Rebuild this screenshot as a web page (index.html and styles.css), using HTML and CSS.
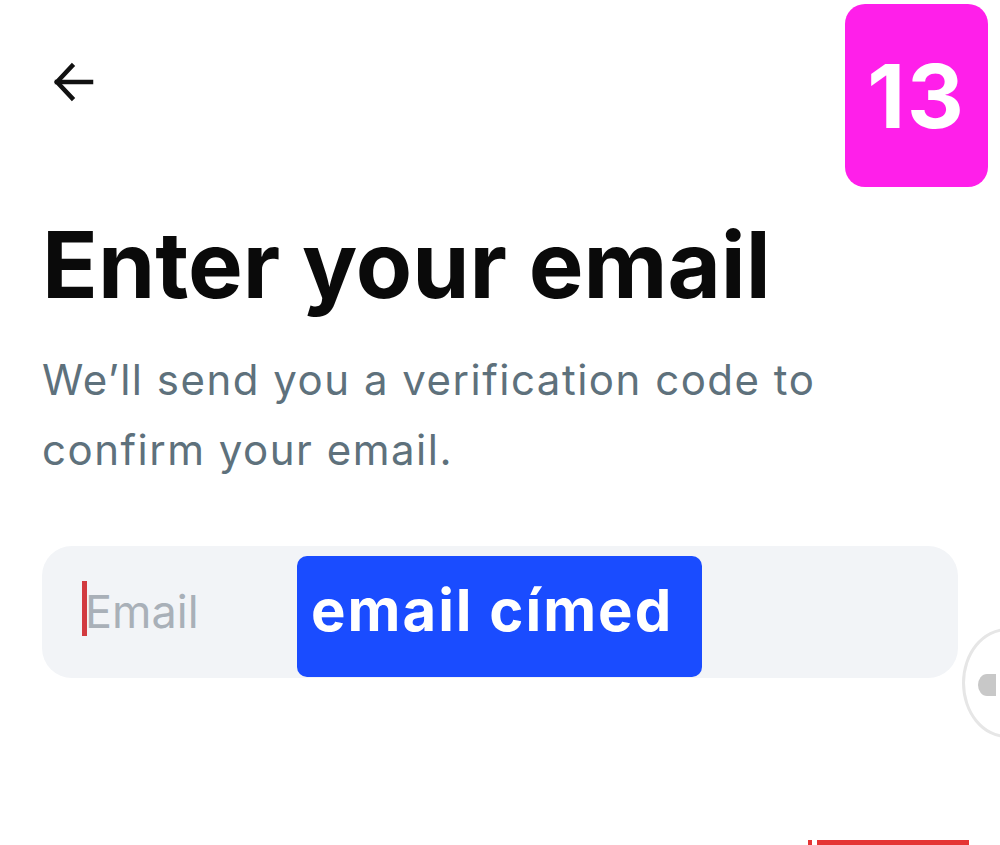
FILE: index.html
```html
<!DOCTYPE html>
<html>
<head>
<meta charset="utf-8">
<link rel="stylesheet" href="styles.css">
</head>
<body>
<div class="screen">
  <header class="top">
    <button class="back" aria-label="Back">
      <svg width="44" height="44" viewBox="0 0 44 44" fill="none" stroke="#111" stroke-width="4.5" stroke-linecap="square">
        <path d="M40 21H6"/>
        <path d="M21 5L6 21L21 37"/>
      </svg>
    </button>
    <div class="badge">13</div>
  </header>
  <h1 class="title">Enter your email</h1>
  <p class="sub">We’ll send you a verification code to confirm your email.</p>
  <div class="field">
    <span class="caret"></span>
    <span class="placeholder">Email</span>
    <span class="tag">email címed</span>
  </div>
  <div class="handle"><span class="dot"></span></div>
  <div class="redbar"><span class="r1"></span><span class="r2"></span></div>
</div>
</body>
</html>
```
FILE: styles.css
```css
* { box-sizing: border-box; }
html, body { margin: 0; padding: 0; background: #fff; }
body { font-family: Inter, "Noto Sans", sans-serif; width: 1000px; height: 845px; overflow: hidden; }
.screen { position: relative; width: 1000px; height: 845px; padding: 0 42px; overflow: hidden; }
.top { display: flex; justify-content: space-between; align-items: flex-start; margin-right: -30px; }
.back { margin-top: 61px; margin-left: 9px; padding: 0; border: 0; background: none; width: 44px; height: 44px; }
.back svg { display: block; }
.badge {
  margin-top: 4px; width: 143px; height: 183px; border-radius: 20px;
  background: #ff1fea; color: #fff; font-weight: 700; font-size: 88px;
  display: flex; align-items: center; justify-content: center; letter-spacing: 2px;
}
.title { margin: 24px 0 0; font-size: 92px; font-weight: 700; color: #0a0a0a; line-height: 108px; letter-spacing: 0; }
.sub { margin: 26px 0 0; font-size: 42px; line-height: 70px; color: #5e717c; width: 820px; font-weight: 400; letter-spacing: 1.5px; }
.field {
  position: relative; margin-top: 61px; height: 132px; width: 916px; border-radius: 30px;
  background: #f2f4f7; display: flex; align-items: center; padding-left: 40px;
}
.caret { width: 5px; height: 55px; background: #d23a3f; margin-top: -7px; }
.placeholder { font-size: 45px; color: #a9b0b8; margin-left: -2px; margin-top: -2px; }
.tag {
  position: absolute; left: 255px; top: 10px; width: 405px; height: 121px; border-radius: 10px;
  background: #1a4cff; color: #fff; font-weight: 700; font-size: 58px; letter-spacing: 2px;
  display: flex; align-items: center; justify-content: flex-start; padding: 0 0 14px 14px;
}
.handle {
  position: absolute; left: 962px; top: 628px; width: 90px; height: 110px; border-radius: 50%;
  border: 3px solid #e6e6e6; background: #fff;
}
.dot { position: absolute; left: 13px; top: 43px; width: 18px; height: 22px; border-radius: 50% 0 0 50%; background: #c8c8c8; }
.redbar { position: absolute; left: 808px; top: 840px; display: flex; gap: 5px; height: 5px; }
.r1 { width: 4px; background: #e53434; }
.r2 { width: 152px; background: #e53434; }
```
